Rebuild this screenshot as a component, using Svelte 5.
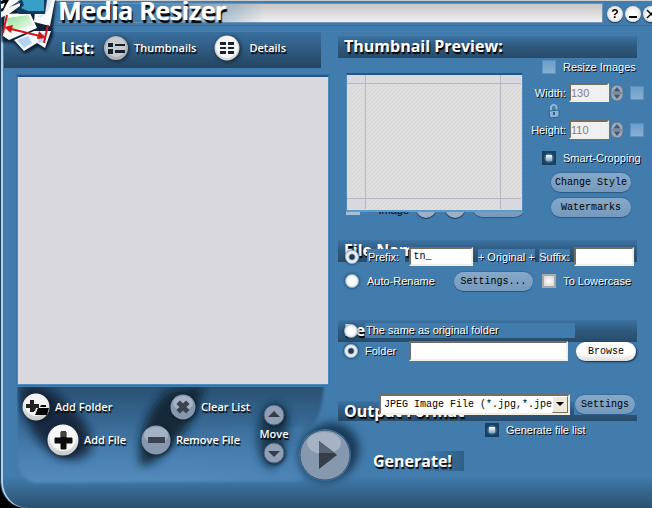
<script>
  let view = $state('thumbnails');
  let prefix = $state('tn_');
  let suffix = $state('');
  let folder = $state('');
  let naming = $state('prefix');
  let target = $state('folder');
</script>

{#snippet spinner()}
  <span class="spinner">
    <svg width="14" height="18" viewBox="0 0 14 18">
      <rect x="1" y="1" width="12" height="16" rx="6" fill="#9aa9ba" stroke="#5c7590" />
      <path d="M3.5 7.5 7 3l3.5 4.500zM3.500 10.500h7L7 15z" fill="#44586f" />
      <path d="M2 9h10" stroke="#54708e" />
    </svg>
  </span>
{/snippet}

<div class="app">
  <header class="titlebar">
    <svg class="logo" width="58" height="54" viewBox="0 0 58 54" aria-hidden="true">
      <defs>
        <linearGradient id="photo" x1="0" y1="0" x2="1" y2="1">
          <stop offset="0" stop-color="#8fe08f" /><stop offset="1" stop-color="#fff" />
        </linearGradient>
        <linearGradient id="plastic" x1="0" y1="0" x2="0" y2="1">
          <stop offset="0" stop-color="#fff" /><stop offset="1" stop-color="#c9c9c9" />
        </linearGradient>
        <filter id="soft"><feGaussianBlur stdDeviation="1.2" /></filter>
      </defs>
      <path d="M2 42 0 18 14 4 56 0 53 28 53 36 46 51 38 47 25 54 14 43z" fill="#0c2438" filter="url(#soft)" />
      <path d="M0 0h20L0 14z" fill="#fff" />
      <path d="M0 2l3-2h6L6 5 3 11 0 12z" fill="#000" />
      <path d="M1 4l4-1-2 5-3 1z" fill="#fff" />
      <path d="M14 40 34 31 51 31 45 48 37 43 24 51z" fill="#f4f9fe" />
      <path d="M17 40 28 36 32 43 24 48zM37 36l8-3-1 9-5 1z" fill="#b4d2f2" />
      <path d="M34 22 36 0h19L50 26z" fill="#fafcfe" />
      <path d="M46 0h6l-3 9-8 9-4-2 8-3z" fill="#dbe7f2" />
      <path d="M5 14 30 13 37 28 9 40 3 36z" fill="#fff" />
      <path d="M7 18 28 15 34 25 8 32z" fill="url(#photo)" />
      <path d="M18 1 21 0h26l-2 14H29l-10 0-3-4 5-4z" fill="#123a60" />
      <path d="M22 0h22v11H28l-7-3 3-3z" fill="#389fc6" />
      <path d="M0 13 10 7 20 3 20 6 9 14 0 18z" fill="#f4f4f4" />
      <path d="M7 15 3 33M48 25l-4 18M7 28l37 9" fill="none" stroke="#d01616" stroke-width="2" />
      <path d="M4 27l9-2-2 8zM46 38l-9 1 2-8z" fill="#d01616" />
    </svg>
    <h1>Media Resizer</h1>
    <div class="strip"></div>
    <div class="window-buttons">
      <button aria-label="Help">?</button>
      <button aria-label="Minimize"><i class="minus"></i></button>
      <button aria-label="Close"><svg width="16" height="16" viewBox="0 0 16 16"><path d="M4 4l8 8M12 4l-8 8" stroke="#000" stroke-width="1.500" /></svg></button>
    </div>
  </header>

  <main>
    <section class="left">
      <div class="listbar">
        <h2>List:</h2>
        <button class="view" aria-pressed={view === 'thumbnails'} onclick={() => (view = 'thumbnails')}>
          <svg width="26" height="26" viewBox="0 0 26 26">
            <circle cx="13" cy="13" r="12" fill="#aeb2b8" /><circle cx="13" cy="12" r="10" fill="#c8cacd" />
            <path d="M5 8h5v4H5zM5 14h5v5H5zM12 9h10v2H12zM12 15h10v3H12z" fill="#15212e" />
          </svg>
          <span>Thumbnails</span>
        </button>
        <button class="view details" aria-pressed={view === 'details'} onclick={() => (view = 'details')}>
          <svg width="26" height="26" viewBox="0 0 26 26">
            <circle cx="13" cy="13" r="12.500" fill="#d8d8d8" /><circle cx="13" cy="12" r="11" fill="#f5f5f5" />
            <path d="M6 7h6v3H6zM14 7h6v3h-6zM6 12h6v2H6zM14 12h6v2h-6zM6 16h6v3H6zM14 16h6v3h-6z" fill="#15212e" />
          </svg>
          <span>Details</span>
        </button>
      </div>

      <div class="files"></div>

      <div class="actions">
        <svg class="shade" viewBox="0 0 320 98" preserveAspectRatio="none" aria-hidden="true">
          <defs>
            <linearGradient id="deck" x1="0" y1="0" x2="0" y2="1">
              <stop offset="0" stop-color="#284c6c" /><stop offset="0.300" stop-color="#32618a" />
              <stop offset="0.750" stop-color="#4a81b3" /><stop offset="1" stop-color="#538bbb" />
            </linearGradient>
            <linearGradient id="across" x1="0" y1="0" x2="1" y2="0">
              <stop offset="0.600" stop-color="#427cad" stop-opacity="0" /><stop offset="1" stop-color="#427cad" stop-opacity="0.500" />
            </linearGradient>
            <filter id="blur" x="-50%" y="-50%" width="200%" height="200%"><feGaussianBlur stdDeviation="5" /></filter>
            <filter id="edge"><feGaussianBlur stdDeviation="1.500" /></filter>
            <clipPath id="deckClip"><path d="M0 0h320v98H0z" /></clipPath>
          </defs>
          <g clip-path="url(#deckClip)">
            <g filter="url(#edge)">
              <path d="M1-6H306Q305 34 290 42 280 50 284 94L18 96Q2 92 1 72z" fill="url(#deck)" />
              <path d="M1 40H288Q280 50 284 94L18 96Q2 92 1 72z" fill="url(#across)" />
            </g>
            <g filter="url(#blur)">
              <path d="M4 0Q30-6 50 18 76 36 74 62 66 78 40 70 4 46 4 0z" fill="#0b1c2b" opacity="0.800" />
              <path d="M186-2Q180 36 150 62 130 84 122 76 120 30 150 4z" fill="#0b1c2b" opacity="0.850" />
              <path d="M258 16Q240 20 240 48 240 76 254 82 272 60 270 24z" fill="#12293e" opacity="0.800" />
            </g>
          </g>
        </svg>
        <div class="groups">
          <div class="pair">
            <button class="act">
              <svg width="28" height="28" viewBox="0 0 28 28">
                <circle cx="14" cy="14" r="13.500" fill="url(#plastic)" /><circle cx="14" cy="12" r="11" fill="#f4f4f4" />
                <path d="M4 11h4V7h4v4h5v4h-3l-1 3h-1v1H8v-4H4z" fill="#222" />
                <path d="M13 22l3-7h11l-2 7zM18 14l1-2h5v2z" fill="#050505" />
              </svg>
              <span>Add Folder</span>
            </button>
            <button class="act inset">
              <svg width="32" height="32" viewBox="0 0 32 32">
                <circle cx="16" cy="16" r="15.500" fill="url(#plastic)" /><circle cx="16" cy="14" r="13" fill="#f8f8f8" />
                <path d="M8 14h6V8h5v6h6v5h-6v6h-5v-6H8z" fill="#0c0c0c" stroke="#0c0c0c" />
                <path d="M14 7h5v6h-5z" fill="#444" />
              </svg>
              <span>Add File</span>
            </button>
          </div>
          <div class="pair second">
            <button class="act clear">
              <svg width="26" height="26" viewBox="0 0 26 26">
                <circle cx="13" cy="13" r="12.500" fill="#8698ae" /><ellipse cx="13" cy="9" rx="10" ry="7" fill="#a5b2c4" />
                <path d="M10 10l6 6M16 10l-6 6" stroke="#3b434f" stroke-width="5" stroke-linecap="square" />
              </svg>
              <span>Clear List</span>
            </button>
            <button class="act">
              <svg width="30" height="30" viewBox="0 0 30 30">
                <circle cx="15" cy="15" r="14.500" fill="#8698ae" /><ellipse cx="15" cy="10" rx="12" ry="8" fill="#a5b2c4" />
                <path d="M7 12h17v6H7z" fill="#3b434f" />
              </svg>
              <span>Remove File</span>
            </button>
          </div>
          <div class="move">
            <button aria-label="Move up">
              <svg width="22" height="22" viewBox="0 0 22 22">
                <circle cx="11" cy="11" r="10" fill="#8fa0b5" stroke="#4c6179" /><path d="M5 13l6-6 6 6z" fill="#333d49" />
              </svg>
            </button>
            <span>Move</span>
            <button aria-label="Move down">
              <svg width="22" height="22" viewBox="0 0 22 22">
                <circle cx="11" cy="11" r="10" fill="#8fa0b5" stroke="#4c6179" /><path d="M5 9h12l-6 6z" fill="#333d49" />
              </svg>
            </button>
          </div>
        </div>
      </div>
    </section>

    <section class="right">
      <h2 class="bar top">Thumbnail Preview:</h2>
      <div class="preview-row">
        <div class="preview-col">
          <div class="preview">
            <svg width="100%" height="100%" aria-hidden="true">
              <defs>
                <pattern id="hatch" width="4" height="4" patternUnits="userSpaceOnUse">
                  <rect width="4" height="4" fill="#dedede" />
                  <path d="M-1 1 1-1M0 4 4 0M3 5 5 3" stroke="#d5d5d5" />
                </pattern>
              </defs>
              <rect width="100%" height="100%" fill="url(#hatch)" />
              <path d="M0 0h18v8H0zM154 0h20v8h-20zM0 124h18v14H0zM154 124h20v14h-20z" fill="#d9d8de" />
              <path d="M0 8.500h174M0 123.500h174M18.500 0v134M153.500 0v134" stroke="#b5b5c4" />
            </svg>
          </div>
          <div class="pager">
            <i class="tick"></i>
            <span>Image</span>
            <button class="dot" aria-label="Previous"></button>
            <button class="dot" aria-label="Next"></button>
            <button class="pill">Example</button>
          </div>
        </div>
        <div class="options">
          <label class="check"><input type="checkbox" class="dim" /><span>Resize Images</span></label>
          <div class="size">
            <label for="w">Width:</label><input id="w" class="field" value="130" disabled />
            {@render spinner()}
            <input type="checkbox" class="dim" aria-label="Lock width" />
          </div>
          <svg class="lock" width="14" height="16" viewBox="0 0 14 16">
            <path d="M4 8V4q2-4 5-1l1 4" fill="none" stroke="#8db5d6" stroke-width="2" />
            <path d="M2 8l10-1v7l-9 1z" fill="#8db5d6" stroke="#2f628f" /><path d="M7 9v3" stroke="#2f628f" stroke-width="2" />
          </svg>
          <div class="size">
            <label for="h">Height:</label><input id="h" class="field" value="110" disabled />
            {@render spinner()}
            <input type="checkbox" class="dim" aria-label="Lock height" />
          </div>
          <label class="check smart"><input type="checkbox" checked /><span>Smart-Cropping</span></label>
          <button class="pill">Change Style</button>
          <button class="pill">Watermarks</button>
        </div>
      </div>

      <div class="block names">
        <h2 class="bar">File Name</h2>
        <div class="rows">
          <div class="row">
            <label class="radio"><input type="radio" bind:group={naming} value="prefix" /><span class="patch">Prefix:</span></label>
            <input class="field prefix" aria-label="Prefix" bind:value={prefix} />
            <span class="patch">+ Original +</span>
            <label class="patch" for="suffix">Suffix:</label>
            <input id="suffix" class="field suffix" bind:value={suffix} />
          </div>
          <div class="row second-row">
            <label class="radio"><input type="radio" bind:group={naming} value="auto" /><span>Auto-Rename</span></label>
            <button class="pill">Settings...</button>
            <label class="check"><input type="checkbox" class="light" /><span>To Lowercase</span></label>
          </div>
        </div>
      </div>

      <div class="block destination">
        <h2 class="bar">Destination</h2>
        <div class="rows">
          <label class="radio same"><input type="radio" bind:group={target} value="same" /><span class="patch">The same as original folder</span></label>
          <div class="row">
            <label class="radio folder"><input type="radio" bind:group={target} value="folder" /><span>Folder</span></label>
            <input class="field path" aria-label="Folder" bind:value={folder} />
            <button class="pill bright">Browse</button>
          </div>
        </div>
      </div>

      <div class="block output">
        <h2 class="bar">Output Format</h2>
        <div class="rows">
          <div class="row">
            <div class="select">
              <select aria-label="Output format"><option>JPEG Image File (*.jpg,*.jpe</option></select>
              <i></i>
            </div>
            <div class="patch holder"><button class="pill">Settings</button></div>
          </div>
          <label class="check list"><input type="checkbox" checked /><span>Generate file list</span></label>
        </div>
      </div>
    </section>

    <button class="generate">
      <svg width="52" height="52" viewBox="0 0 52 52">
        <circle cx="26" cy="26" r="25" fill="#8698ae" stroke="#3b5672" /><ellipse cx="25" cy="14" rx="17" ry="11" fill="#a6b3c5" />
        <path d="M20 12v28l18-14z" fill="#343d48" /><path d="M20 12v12h16z" fill="#596575" />
      </svg>
      <span>Generate!</span>
    </button>
  </main>
</div>

<style>
  :global(body) { background: #000; }
  * { box-sizing: border-box; }
  h1, h2 { margin: 0; font-weight: 700; }
  button { border: 0; padding: 0; background: none; font: inherit; color: inherit; cursor: pointer; }
  svg { display: block; flex: none; }
  input { margin: 0; flex: none; }
  .app {
    min-height: 100vh;
    display: flex;
    flex-direction: column;
    overflow: hidden;
    border-left: 1px solid #1e3f5e;
    border-bottom-left-radius: 26px;
    box-shadow: inset 2px 0 0 #b4d0e6;
    background: linear-gradient(to top, #2b506f, #427cad 32px);
    color: #fff;
    font: 11px/16px "Liberation Sans", Arial, sans-serif;
  }
  h1, h2, .view, .act, .move, .generate {
    font-family: "Open Sans", "Noto Sans", sans-serif;
    text-shadow: 1px 2px 1px #000;
  }

  .titlebar { position: relative; height: 26px; display: flex; border-top: 1px solid #c9cdd0; border-bottom: 1px solid #356c9b; }
  .logo { position: absolute; left: -1px; top: -1px; z-index: 2; }
  h1 { position: absolute; left: 57px; top: -8px; font-size: 25px; font-weight: 600; line-height: 34px; white-space: nowrap; z-index: 1; text-shadow: 1px 0 0 #fff, 2px 3px 1px #000; }
  .strip {
    flex: 1;
    margin: 2px 0 2px 57px;
    border: solid #6f93b2;
    border-width: 1px 1px 1px 0;
    background: linear-gradient(to right, #427cad 15%, transparent 38%), linear-gradient(#c6c6c6, #f0f0f0);
  }
  .window-buttons { display: flex; gap: 2px; margin: 5px -7px 0 4px; }
  .window-buttons button {
    width: 16px; height: 16px; border-radius: 50%;
    background: radial-gradient(#fff 30%, #c9c9c9); color: #000;
    font-size: 12px; font-weight: bold; line-height: 16px;
    box-shadow: 0 1px 1px #173450;
  }
  .minus { display: block; width: 8px; height: 2px; margin: 6px auto 0; background: #000; }

  main { flex: 1; display: grid; grid-template-columns: 337px 1fr; align-items: start; }
  .left { grid-area: 1 / 1; }
  .right { grid-area: 1 / 2; padding-right: 15px; min-width: 0; }

  .listbar {
    display: flex; align-items: center;
    height: 36px; margin: 6px 17px 0 3px; padding-left: 57px;
    background: linear-gradient(#386f9f, #305a80 50%, #25455f);
  }
  .listbar h2 { width: 42px; font-size: 16px; line-height: 20px; padding-bottom: 4px; }
  .view, .act { display: flex; align-items: center; gap: 5px; font-size: 11px; font-weight: 600; line-height: 16px; }
  .view { padding-bottom: 4px; }
  .view svg, .act svg, .move svg { filter: drop-shadow(1px 1px 2px #0b1c2b); }
  .details { margin-left: 18px; gap: 9px; }

  .files { height: 310px; margin: 7px 9px 0 16px; border: 1px solid #4f8abd; border-top: 2px solid #24558a; background: #d9d8de; outline: 1px solid #3c72a3; }

  .actions { position: relative; margin: 2px 0 0 16px; }
  .shade { position: absolute; inset: 0; width: 100%; height: 98px; }
  .groups { position: relative; display: flex; }
  .pair { display: flex; flex-direction: column; padding: 6px 0 0 5px; gap: 3px; width: 120px; }
  .inset { margin-left: 25px; }
  .second { width: 119px; padding: 7px 0 0 4px; white-space: nowrap; }
  .clear { margin-left: 29px; margin-bottom: 2px; }
  .move { display: flex; flex-direction: column; align-items: center; width: 36px; margin-top: 17px; font-size: 11px; font-weight: 600; line-height: 16px; }

  .bar {
    height: 22px; padding-left: 6px; white-space: nowrap;
    font-size: 16px; line-height: 20px;
    background: linear-gradient(#3c74a3, #2e587c 50%, #284c6a);
  }
  .top { margin-top: 10px; }
  .right span, .right label { text-shadow: 1px 1px 0 #000; white-space: nowrap; }

  .preview-row { display: flex; justify-content: space-between; margin-right: -8px; }
  .preview-col { padding: 15px 0 0 8px; }
  .preview { width: 177px; height: 139px; border: 1px solid #4f8abd; border-top: 2px solid #24558a; border-bottom: 2px solid #5d9bcb; }
  .pager { display: flex; align-items: flex-end; height: 7px; overflow: hidden; }
  .pager .tick { width: 14px; height: 14px; margin-bottom: 4px; background: #a8bfd3; flex: none; }
  .pager span { width: 56px; padding-right: 7px; color: #000; text-shadow: none; text-align: right; line-height: 12px; margin-bottom: 3px; }
  .dot { width: 20px; height: 20px; margin: 0 9px 1px 0; flex: none; border-radius: 50%; background: #9bb0c6; box-shadow: 0 1px 1px #173450; }
  .pager .pill { width: 51px; margin: 0 0 2px -1px; flex: none; line-height: 16px; }

  .options { width: 115px; margin-right: 1px; display: flex; flex-direction: column; align-items: flex-start; }
  .check, .radio { display: flex; align-items: center; gap: 7px; height: 18px; }
  .options > .check { padding-left: 13px; }
  .size { display: flex; align-items: center; width: 100%; height: 19px; }
  .options > .check + .size { margin-top: 7px; }
  .size label { flex: 1; text-align: right; padding-right: 3px; }
  .size .field { width: 40px; }
  .spinner { margin: 0 6px 0 1px; }
  .lock { margin: 1px 0 1px 18px; }
  .smart { margin: 10px 0 6px; }
  .options > .pill { width: 80px; margin: 0 0 6px 22px; }

  .pill {
    height: 19px; border-radius: 10px;
    background: linear-gradient(#86a9c9, #7599bd);
    box-shadow: 0 1px 1px #28567f, 0 -1px 1px #376b99;
    color: #000;
    font: 10px/20px "Liberation Mono", "Courier New", monospace;
    white-space: nowrap;
  }
  .bright { background: linear-gradient(#fff 60%, #dcdcdc); box-shadow: 1px 1px 2px #0f2a42; }
  .field {
    height: 19px; padding: 0 2px; border-radius: 0;
    border: 2px solid;
    border-color: #716f64 #f1efe2 #f1efe2 #716f64;
    background: #fff; color: #000;
    font: 10px/14px "Liberation Mono", "Courier New", monospace;
  }
  .field:disabled { padding: 0; background: #f0f0f0; color: #808080; font: 11px/14px "Liberation Sans", Arial, sans-serif; }

  input[type="checkbox"], input[type="radio"] { appearance: none; width: 14px; height: 14px; border: 1px solid #28567f; }
  input[type="checkbox"] { background: linear-gradient(#fff, #7ba7cb) center / 6px 6px no-repeat, radial-gradient(#9cc0dd 20%, #1a4467 75%); border: 2px solid #1b3f5e; }
  input.dim { border: 1px solid #5f90ba; background: linear-gradient(#6b9ec9, #86b0d4); }
  input.light { border: 2px solid #a9a9a9; background: radial-gradient(#fff, #d2d2d2); }
  input[type="radio"] { border-radius: 50%; border-color: #9fb3c6; background: radial-gradient(#fff 35%, #cfd4d9); box-shadow: 0 0 3px #12314d; }
  input[type="radio"]:checked { background: radial-gradient(#1b3d5c 25%, #e9eef2 45%); }

  .block { display: grid; }
  .block > * { grid-area: 1 / 1; min-width: 0; }
  .row { display: flex; align-items: center; }
  .patch { background: #427cad; }
  .rows { position: relative; padding-left: 7px; }

  .names { margin-top: 17px; }
  .names .rows { padding-top: 7px; }
  .names .radio { gap: 8px; }
  .names .radio .patch { width: 38px; padding-left: 1px; }
  .names .row { justify-content: space-between; height: 19px; margin-right: 3px; }
  .names .second-row { height: 20px; margin: 5px 6px 0 0; }
  .names .second-row .pill { width: 79px; margin-left: 10px; }
  .prefix { width: 64px; }
  .suffix { width: 60px; }

  .destination { margin-top: 29px; }
  .destination .rows { padding: 2px 0 0 6px; }
  .destination .radio { height: 17px; }
  .destination .row { margin-top: 2px; }
  .same .patch { width: 210px; padding-left: 1px; line-height: 15px; }
  .folder { width: 65px; }
  .path { flex: 1; min-width: 0; height: 20px; margin-right: 8px; }
  .destination .pill { width: 60px; margin-right: 1px; }

  .output { margin-top: 33px; }
  .output .bar { margin-top: 7px; height: 20px; }
  .output .rows { padding-left: 41px; }
  .select { position: relative; flex: 1; min-width: 0; }
  .select select {
    appearance: none; display: block; width: 100%; height: 21px; padding: 0 16px 0 3px; border-radius: 0;
    border: 2px solid; border-color: #716f64 #f1efe2 #f1efe2 #716f64; background: #fff; color: #000;
    font: 10px/16px "Liberation Mono", "Courier New", monospace;
  }
  .select i {
    position: absolute; right: 2px; top: 2px; width: 16px; height: 17px; pointer-events: none;
    border: 1px solid; border-color: #fff #716f64 #716f64 #fff; background: #ece9d8;
  }
  .select i::after { content: ""; position: absolute; left: 3px; top: 5px; border: 4px solid transparent; border-top-color: #000; border-bottom: 0; }
  .holder { display: flex; padding: 1px 2px 1px 1px; margin-left: 4px; }
  .holder .pill { width: 60px; }
  .list { margin: 6px 0 0 106px; }

  .generate {
    grid-area: 1 / 1 / 2 / 3; align-self: start; justify-self: start; z-index: 1;
    display: flex; align-items: center; gap: 22px;
    margin: 403px 0 0 298px; padding-right: 16px;
    font-size: 16px; font-weight: 700; line-height: 20px;
  }
  .generate svg { border-radius: 50%; box-shadow: 8px -6px 10px #1b3b57, 0 0 8px #1b3b57; }
  .generate span { margin-top: 12px; padding-right: 12px; background: linear-gradient(to right, transparent 50%, #2f5f87); }
</style>
